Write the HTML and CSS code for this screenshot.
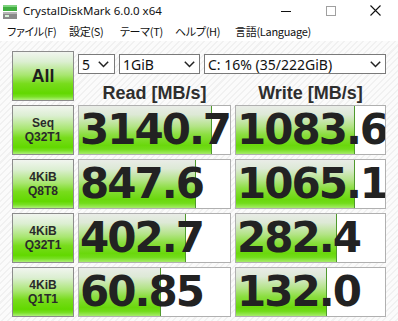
FILE: index.html
```html
<!DOCTYPE html>
<html>
<head>
    <title>CrystalDiskMark 6.0.0 x64</title>
    <link rel="stylesheet" href="styles.css">
</head>
<body>
<div class="window">
    <div class="titlebar">
        <svg class="app-icon" width="16" height="16" viewBox="0 0 16 16">
            <rect x="1" y="2" width="14" height="6" fill="#3fae3f"/>
            <rect x="1" y="2" width="14" height="2" fill="#7fd27f"/>
            <rect x="1" y="9" width="14" height="7" fill="#8a8a8a"/>
            <rect x="1" y="9" width="14" height="2" fill="#b5b5b5"/>
            <rect x="3" y="12" width="4" height="2" fill="#d8f0d8"/>
        </svg>
        <span class="title">CrystalDiskMark 6.0.0 x64</span>
        <div class="win-buttons">
            <div class="win-btn">
                <svg width="10" height="10" viewBox="0 0 10 10"><path d="M0 5.5H10" stroke="#111" stroke-width="1"/></svg>
            </div>
            <div class="win-btn">
                <svg width="10" height="10" viewBox="0 0 10 10"><rect x="0.5" y="0.5" width="9" height="9" fill="none" stroke="#a0a0a0"/></svg>
            </div>
            <div class="win-btn">
                <svg width="11" height="11" viewBox="0 0 11 11"><path d="M0.5 0.5L10.5 10.5M10.5 0.5L0.5 10.5" stroke="#111" stroke-width="1.1"/></svg>
            </div>
        </div>
    </div>
    <div class="menubar">
        <span class="menu-item">ファイル(F)</span>
        <span class="menu-item">設定(S)</span>
        <span class="menu-item">テーマ(T)</span>
        <span class="menu-item">ヘルプ(H)</span>
        <span class="menu-item">言語(Language)</span>
    </div>
    <div class="main">
        <div class="board">
            <div class="label all">All</div>
            <div class="controls">
                <div class="combos">
                    <div class="combo combo-count">
                        <span>5</span>
                        <svg width="11" height="7" viewBox="0 0 11 7"><path d="M0.8 0.8L5.5 5.5L10.2 0.8" fill="none" stroke="#222" stroke-width="1.5"/></svg>
                    </div>
                    <div class="combo combo-size">
                        <span>1GiB</span>
                        <svg width="11" height="7" viewBox="0 0 11 7"><path d="M0.8 0.8L5.5 5.5L10.2 0.8" fill="none" stroke="#222" stroke-width="1.5"/></svg>
                    </div>
                    <div class="combo combo-drive">
                        <span>C: 16% (35/222GiB)</span>
                        <svg width="11" height="7" viewBox="0 0 11 7"><path d="M0.8 0.8L5.5 5.5L10.2 0.8" fill="none" stroke="#222" stroke-width="1.5"/></svg>
                    </div>
                </div>
                <div class="heads">
                    <div class="head">Read [MB/s]</div>
                    <div class="head">Write [MB/s]</div>
                </div>
            </div>

            <div class="label">Seq<br>Q32T1</div>
            <div class="value"><div class="bar" style="width: 133px"></div><div class="num">3140.7</div></div>
            <div class="value"><div class="bar" style="width: 119px"></div><div class="num">1083.6</div></div>

            <div class="label">4KiB<br>Q8T8</div>
            <div class="value"><div class="bar" style="width: 117px"></div><div class="num">847.6</div></div>
            <div class="value"><div class="bar" style="width: 119px"></div><div class="num">1065.1</div></div>

            <div class="label">4KiB<br>Q32T1</div>
            <div class="value"><div class="bar" style="width: 107px"></div><div class="num">402.7</div></div>
            <div class="value"><div class="bar" style="width: 101px"></div><div class="num">282.4</div></div>

            <div class="label">4KiB<br>Q1T1</div>
            <div class="value"><div class="bar" style="width: 82px"></div><div class="num">60.85</div></div>
            <div class="value"><div class="bar" style="width: 91px"></div><div class="num">132.0</div></div>
        </div>
    </div>
</div>
</body>
</html>
```

FILE: styles.css
```css
body {
    margin: 0;
    font-family: "Noto Sans", "Noto Sans CJK JP", sans-serif;
    color: #111;
    background: #fff;
}

.window {
    width: 398px;
    height: 321px;
    overflow: hidden;
}

.titlebar {
    height: 21px;
    display: flex;
    align-items: center;
    padding-left: 2px;
    background: #fff;
}

.app-icon {
    flex: none;
}

.title {
    margin-left: 5px;
    font-size: 11.5px;
    color: #111;
}

.win-buttons {
    margin-left: auto;
    display: flex;
    height: 100%;
}

.win-btn {
    width: 45px;
    display: flex;
    align-items: center;
    justify-content: center;
}

.menubar {
    height: 20px;
    display: grid;
    grid-template-columns: 62px 51px 55px 60px auto;
    align-items: center;
    padding-left: 7px;
    font-family: "Noto Sans CJK JP", sans-serif;
    font-feature-settings: "palt";
    font-size: 11px;
    letter-spacing: -0.3px;
    color: #111;
    background: #fff;
}

.menu-item {
    white-space: nowrap;
}

.main {
    height: 280px;
    padding: 10px 0 0 12px;
    box-sizing: border-box;
    background: repeating-linear-gradient(135deg, #f1f1f1 0 1.5px, #fbfbfb 1.5px 4.5px);
}

.board {
    display: grid;
    grid-template-columns: 62px 153px 151px;
    grid-auto-rows: 50px;
    gap: 4px;
}

.label {
    box-sizing: border-box;
    border: 1px solid #8c8c8c;
    background: linear-gradient(#f1f5ef 0%, #dcefd2 20%, #a8e670 48%, #78dc1c 66%, #62d800 86%, #78e024 93%, #aef07a 100%);
    display: flex;
    align-items: center;
    justify-content: center;
    text-align: center;
    font-family: "Liberation Sans", Arial, sans-serif;
    font-weight: bold;
    font-size: 12px;
    line-height: 14px;
    color: #2a2a2a;
}

.label.all {
    font-size: 18px;
    color: #1e1e1e;
}

.controls {
    grid-column: 2 / 4;
    display: flex;
    flex-direction: column;
}

.combos {
    margin-top: 3px;
    display: flex;
    gap: 4px;
}

.combo {
    box-sizing: border-box;
    height: 20px;
    border: 1px solid #7a7a7a;
    background: #fff;
    display: flex;
    align-items: center;
    justify-content: space-between;
    padding: 0 4px 0 3px;
    font-size: 14px;
    color: #111;
}

.combo-count {
    width: 37px;
    padding-right: 5px;
}

.combo-size {
    width: 81px;
}

.combo-drive {
    width: 182px;
}

.heads {
    margin-top: auto;
    display: grid;
    grid-template-columns: 153px 151px;
    gap: 4px;
    margin-bottom: -1px;
}

.head {
    text-align: center;
    font-family: "Liberation Sans", Arial, sans-serif;
    font-weight: bold;
    font-size: 18px;
    line-height: 18px;
    color: #2e2e2e;
}

.value {
    box-sizing: border-box;
    border: 1px solid #b0b0b0;
    background: #fff;
    display: grid;
    overflow: hidden;
}

.bar {
    grid-area: 1 / 1;
    justify-self: start;
    height: 100%;
    box-sizing: border-box;
    border-right: 1px solid #4f9a2c;
    background: linear-gradient(#e9ece7 0%, #dde9d6 18%, #b4e488 42%, #8ade3e 60%, #6ad80c 82%, #72dc1a 90%, #a6ec6a 100%);
}

.num {
    grid-area: 1 / 1;
    padding-left: 1px;
    font-family: "DejaVu Sans", Verdana, sans-serif;
    font-weight: bold;
    font-size: 42px;
    line-height: 48px;
    letter-spacing: -2px;
    color: #222;
    white-space: nowrap;
}
```
